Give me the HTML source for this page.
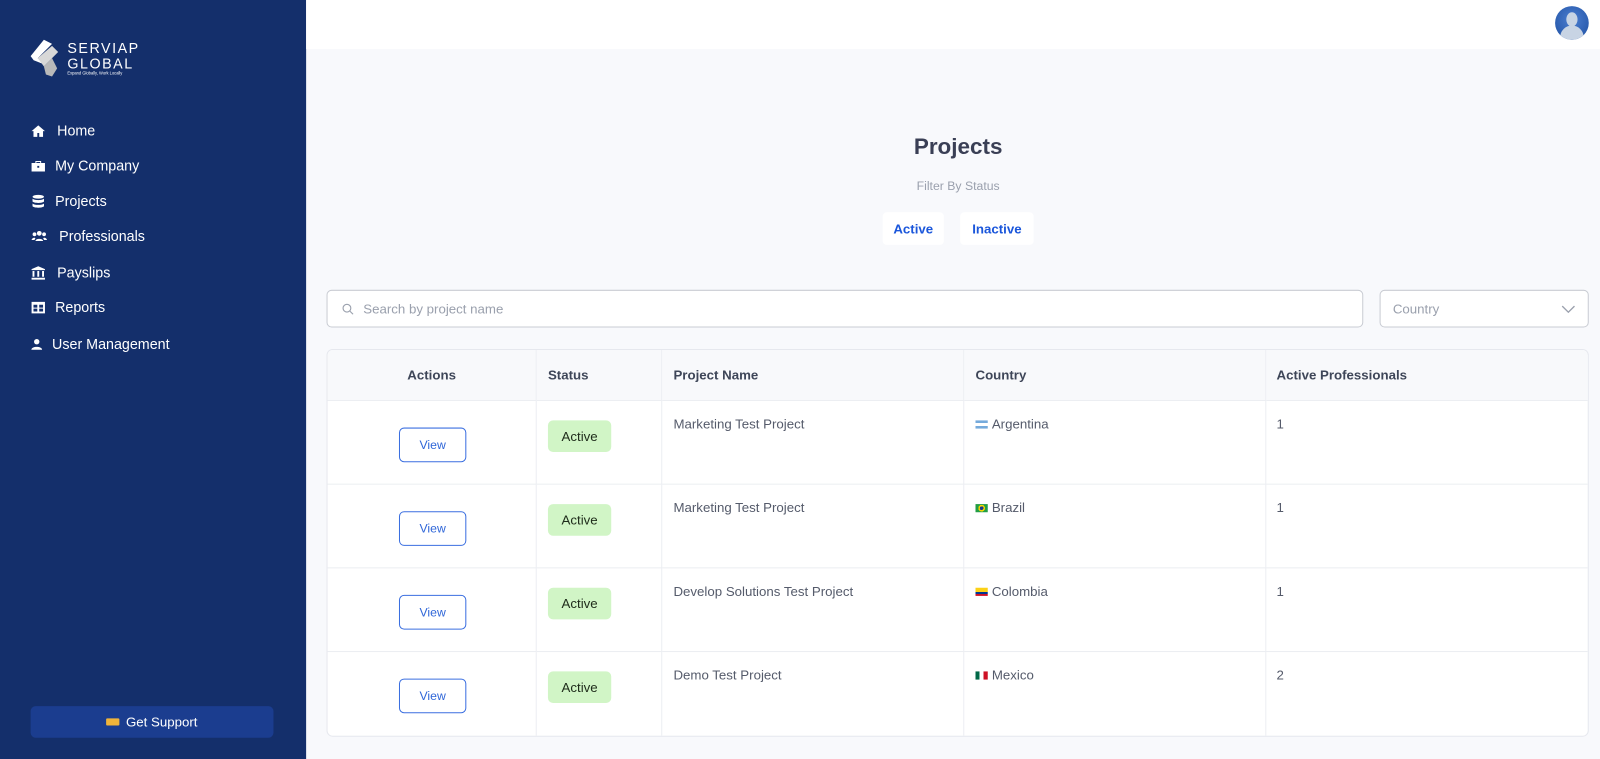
<!DOCTYPE html>
<html><head><meta charset="utf-8"><style>
*{box-sizing:border-box;margin:0;padding:0}
html,body{width:1600px;height:759px;overflow:hidden;background:#f8f9fc}
#w{width:1568px;height:744px;position:relative;transform:scale(1.0204);transform-origin:0 0;font-family:"Liberation Sans",sans-serif;background:#f8f9fc}
.sb{position:absolute;left:0;top:0;width:300px;height:744px;background:#142f6b;color:#fff}
.nav{position:absolute;left:30px;font-size:14px;display:flex;align-items:center;gap:9px}
.nav svg{width:15px;height:15px;fill:#fff}
.hdr{position:absolute;left:300px;top:0;right:0;height:48px;background:#fff}
.btn{position:absolute;top:208px;height:32px;background:#fff;border-radius:4px;color:#1a56db;font-size:13px;font-weight:bold;display:flex;align-items:center;justify-content:center}
.tbl{position:absolute;left:320px;top:342px;width:1237px;height:380px;background:#fff;border:1px solid #e6e8ee;border-radius:6px;overflow:hidden}
.c{position:absolute;border-right:1px solid #eceef2;border-bottom:1px solid #eceef2;font-size:13px;color:#555b6b}
.h{background:#f8f9fb;font-weight:bold;color:#3e4658;display:flex;align-items:center}
.view{position:absolute;left:70px;top:26px;width:66px;height:34px;border:1px solid #3b6fe0;border-radius:5px;color:#2f66d8;font-size:12px;display:flex;align-items:center;justify-content:center}
.act{position:absolute;left:11px;top:19px;width:62px;height:31px;background:#d1f5c6;border-radius:5px;color:#1e2b1a;font-size:13px;display:flex;align-items:center;justify-content:center}
.flag{display:inline-block;width:12px;height:8px;margin-right:4px;vertical-align:0}
</style></head><body><div id="w">
<div class="sb">
 <svg style="position:absolute;left:29px;top:37px" width="30" height="40" viewBox="0 0 30 40"><path d="M14 2 L22 6 L8 20 L14 26 L4 22 L1 18Z" fill="#fff"/><path d="M8 20 L22 8 L28 14 L14 28Z" fill="#d8d8d8"/><path d="M14 28 L22 20 L27 30 L22 38 L16 36Z" fill="#b9b9b9"/></svg>
 <div style="position:absolute;left:66px;top:40px;font-size:14px;letter-spacing:1.5px;line-height:15px">SERVIAP<br>GLOBAL</div>
 <div style="position:absolute;left:66px;top:69px;font-size:4px">Expand Globally, Work Locally</div>
 <div class="nav" style="top:120px"><svg viewBox="0 0 16 16"><path d="M8 2L1 8h2v6h4v-4h2v4h4V8h2z"/></svg><span style="margin-left:2px">Home</span></div>
 <div class="nav" style="top:154px"><svg viewBox="0 0 16 16"><path d="M5 3h6v2h4v9H1V5h4zM6 4v1h4V4zM7 8v2h2V8z"/></svg>My Company</div>
 <div class="nav" style="top:189px"><svg viewBox="0 0 16 16"><ellipse cx="8" cy="3" rx="6" ry="2"/><path d="M2 5c2 2 10 2 12 0v3c-2 2-10 2-12 0zM2 10c2 2 10 2 12 0v3c-2 2-10 2-12 0z"/></svg>Projects</div>
 <div class="nav" style="top:223px"><svg viewBox="0 0 16 16" style="width:17px"><circle cx="8" cy="5" r="2.5"/><circle cx="3" cy="6" r="2"/><circle cx="13" cy="6" r="2"/><path d="M4 13c0-3 8-3 8 0zM0 12c0-2 3-3 4-2l-1 2zM16 12c0-2-3-3-4-2l1 2z"/></svg><span style="margin-left:2px">Professionals</span></div>
 <div class="nav" style="top:259px"><svg viewBox="0 0 16 16"><path d="M8 1l7 3v1H1V4zM2 6h2v6H2zM7 6h2v6H7zM12 6h2v6h-2zM1 13h14v2H1z"/></svg><span style="margin-left:2px">Payslips</span></div>
 <div class="nav" style="top:293px"><svg viewBox="0 0 16 16"><path d="M1 2h14v12H1zM3 5v3h4V5zM9 5v3h4V5zM3 9v3h4V9zM9 9v3h4V9z"/></svg>Reports</div>
 <div class="nav" style="top:329px"><svg viewBox="0 0 16 16" style="width:12px"><circle cx="8" cy="4.5" r="3.5"/><path d="M1 15c0-5 14-5 14 0z"/></svg>User Management</div>
 <div style="position:absolute;left:30px;top:692px;width:238px;height:31px;background:#1b3d8f;border-radius:5px;display:flex;align-items:center;justify-content:center;font-size:13px"><span style="display:inline-block;width:13px;height:7px;background:#f0b43a;margin-right:6px;border-radius:1px"></span>Get Support</div>
</div>
<div class="hdr"><div style="position:absolute;right:11px;top:6px;width:33px;height:33px;border-radius:50%;overflow:hidden;background:radial-gradient(circle at 50% 40%,#4d7fd1,#1c4ea0)"><div style="position:absolute;left:11px;top:6px;width:11px;height:14px;border-radius:50%;background:#c8d4e4"></div><div style="position:absolute;left:5px;top:19px;width:23px;height:14px;border-radius:12px 12px 0 0;background:#c8d4e4"></div></div></div>
<div style="position:absolute;left:300px;width:1278px;top:131px;text-align:center;font-size:22px;font-weight:bold;color:#3a3f55">Projects</div>
<div style="position:absolute;left:300px;width:1278px;top:175px;text-align:center;font-size:12px;color:#9aa0ad">Filter By Status</div>
<div class="btn" style="left:865px;width:60px">Active</div>
<div class="btn" style="left:941px;width:72px">Inactive</div>
<div style="position:absolute;left:320px;top:284px;width:1016px;height:37px;background:#fff;border:1px solid #c9ccd3;border-radius:5px;font-size:13px;color:#9aa0ad;display:flex;align-items:center;padding-left:14px"><svg width="12" height="12" viewBox="0 0 12 12" style="margin-right:9px"><circle cx="5" cy="5" r="3.8" fill="none" stroke="#9aa0ad" stroke-width="1.1"/><path d="M8 8l3 3" stroke="#9aa0ad" stroke-width="1.1"/></svg>Search by project name</div>
<div style="position:absolute;left:1352px;top:284px;width:205px;height:37px;background:#fff;border:1px solid #c9ccd3;border-radius:5px;font-size:13px;color:#9aa0ad;display:flex;align-items:center;padding-left:12px">Country<svg width="14" height="8" viewBox="0 0 14 8" style="position:absolute;right:12px;top:14px"><path d="M1 1l6 6 6-6" fill="none" stroke="#9aa0ad" stroke-width="1.3"/></svg></div>
<div class="tbl">
 <div class="c h" style="left:0;top:0;width:205px;height:50px;justify-content:center">Actions</div>
 <div class="c h" style="left:205px;top:0;width:123px;height:50px;padding-left:11px">Status</div>
 <div class="c h" style="left:328px;top:0;width:296px;height:50px;padding-left:11px">Project Name</div>
 <div class="c h" style="left:624px;top:0;width:296px;height:50px;padding-left:11px">Country</div>
 <div class="c h" style="left:920px;top:0;width:317px;height:50px;padding-left:10px;border-right:none">Active Professionals</div>
 <div class="c" style="left:0;top:50px;width:205px;height:82px"><div class="view">View</div></div>
 <div class="c" style="left:205px;top:50px;width:123px;height:82px"><div class="act">Active</div></div>
 <div class="c" style="left:328px;top:50px;width:296px;height:82px;padding:15px 11px">Marketing Test Project</div>
 <div class="c" style="left:624px;top:50px;width:296px;height:82px;padding:15px 11px"><span class="flag" style="background:linear-gradient(#75aadb 33%,#fff 33% 66%,#75aadb 66%)"></span>Argentina</div>
 <div class="c" style="left:920px;top:50px;width:317px;height:82px;padding:15px 10px;border-right:none">1</div>
 <div class="c" style="left:0;top:132px;width:205px;height:82px"><div class="view">View</div></div>
 <div class="c" style="left:205px;top:132px;width:123px;height:82px"><div class="act">Active</div></div>
 <div class="c" style="left:328px;top:132px;width:296px;height:82px;padding:15px 11px">Marketing Test Project</div>
 <div class="c" style="left:624px;top:132px;width:296px;height:82px;padding:15px 11px"><span class="flag" style="background:radial-gradient(circle,#1a3a8f 25%,#f7d500 26% 45%,#229e45 46%)"></span>Brazil</div>
 <div class="c" style="left:920px;top:132px;width:317px;height:82px;padding:15px 10px;border-right:none">1</div>
 <div class="c" style="left:0;top:214px;width:205px;height:82px"><div class="view">View</div></div>
 <div class="c" style="left:205px;top:214px;width:123px;height:82px"><div class="act">Active</div></div>
 <div class="c" style="left:328px;top:214px;width:296px;height:82px;padding:15px 11px">Develop Solutions Test Project</div>
 <div class="c" style="left:624px;top:214px;width:296px;height:82px;padding:15px 11px"><span class="flag" style="background:linear-gradient(#fcd116 50%,#003893 50% 75%,#ce1126 75%)"></span>Colombia</div>
 <div class="c" style="left:920px;top:214px;width:317px;height:82px;padding:15px 10px;border-right:none">1</div>
 <div class="c" style="left:0;top:296px;width:205px;height:84px;border-bottom:none"><div class="view">View</div></div>
 <div class="c" style="left:205px;top:296px;width:123px;height:84px;border-bottom:none"><div class="act">Active</div></div>
 <div class="c" style="left:328px;top:296px;width:296px;height:84px;padding:15px 11px;border-bottom:none">Demo Test Project</div>
 <div class="c" style="left:624px;top:296px;width:296px;height:84px;padding:15px 11px;border-bottom:none"><span class="flag" style="background:linear-gradient(90deg,#006847 33%,#fff 33% 66%,#ce1126 66%)"></span>Mexico</div>
 <div class="c" style="left:920px;top:296px;width:317px;height:84px;padding:15px 10px;border:none">2</div>
</div>
</div></body></html>
